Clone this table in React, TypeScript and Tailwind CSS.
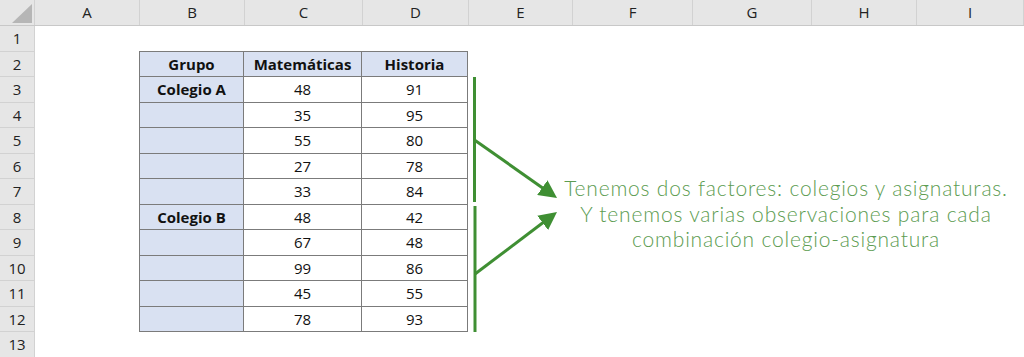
import React from "react";

// Anchos de columna (px) tomados de la captura
const cols = [
  { name: "A", w: "w-[105px]" },
  { name: "B", w: "w-[105px]" },
  { name: "C", w: "w-[118px]" },
  { name: "D", w: "w-[106px]" },
  { name: "E", w: "w-[104px]" },
  { name: "F", w: "w-[120px]" },
  { name: "G", w: "w-[119px]" },
  { name: "H", w: "w-[105px]" },
  { name: "I", w: "w-[107px]" },
];

const mates = [48, 35, 55, 27, 33, 48, 67, 99, 45, 78];
const historia = [91, 95, 80, 78, 84, 42, 48, 86, 55, 93];

function RowHeader({ n }: { n: number }) {
  return (
    <div className="w-[35px] shrink-0 h-full flex items-center justify-center bg-[#e6e6e6] border-r border-b border-[#d2d2d2] text-[15px] text-[#222]">
      {n}
    </div>
  );
}

function Row({ n }: { n: number }) {
  const tableRow = n >= 2 && n <= 12;
  const i = n - 3;
  const first = n === 2;
  const bold = n === 2 ? "font-bold" : "";
  return (
    <div className="flex h-[25.5px]">
      <RowHeader n={n} />
      <div className={`${cols[0].w} shrink-0`} />
      {tableRow ? (
        <>
          <div
            className={`${cols[1].w} shrink-0 flex items-center justify-center bg-[#d9e1f2] border-l border-r border-b border-[#7b7b7b] -ml-px ${first ? "border-t -mt-px" : ""} font-bold text-[15px] text-[#111]`}
          >
            {n === 2 ? "Grupo" : n === 3 ? "Colegio A" : n === 8 ? "Colegio B" : ""}
          </div>
          <div
            className={`${cols[2].w} shrink-0 flex items-center justify-center border-r border-b border-[#7b7b7b] ${first ? "bg-[#d9e1f2] border-t -mt-px" : "bg-white"} ${bold} text-[15px] text-[#111]`}
          >
            {n === 2 ? "Matemáticas" : mates[i]}
          </div>
          <div
            className={`${cols[3].w} shrink-0 flex items-center justify-center border-r border-b border-[#7b7b7b] -mr-px ${first ? "bg-[#d9e1f2] border-t -mt-px" : "bg-white"} ${bold} text-[15px] text-[#111]`}
          >
            {n === 2 ? "Historia" : historia[i]}
          </div>
        </>
      ) : (
        <>
          <div className={`${cols[1].w} shrink-0`} />
          <div className={`${cols[2].w} shrink-0`} />
          <div className={`${cols[3].w} shrink-0`} />
        </>
      )}
      <div className="flex-1" />
    </div>
  );
}

export default function App() {
  return (
    <div
      className="relative w-[1024px] h-[357px] overflow-hidden bg-white"
      style={{ fontFamily: "'Open Sans', 'Liberation Sans', sans-serif" }}
    >
      {/* Cabecera de columnas */}
      <div className="flex h-[26px] bg-[#e6e6e6] border-b border-[#c8c8c8]">
        <div className="w-[35px] shrink-0 relative border-r border-[#d2d2d2]">
          <svg className="absolute inset-0" width="35" height="26" viewBox="0 0 35 26">
            <polygon points="12,23 32,23 32,4" fill="#b6b6b6" />
          </svg>
        </div>
        {cols.map((c) => (
          <div
            key={c.name}
            className={`${c.w} shrink-0 flex items-center justify-center border-r border-[#d2d2d2] text-[15px] text-[#222]`}
          >
            {c.name}
          </div>
        ))}
      </div>

      {/* Filas */}
      <div className="flex flex-col">
        {Array.from({ length: 13 }, (_, k) => (
          <Row key={k + 1} n={k + 1} />
        ))}
      </div>

      {/* Llaves y flechas */}
      <svg className="absolute left-0 top-0 pointer-events-none" width="1024" height="357">
        <defs>
          <marker id="head" markerWidth="6" markerHeight="6" refX="4.2" refY="3" orient="auto" markerUnits="strokeWidth">
            <path d="M0,0 L6,3 L0,6 Z" fill="#3f8f33" />
          </marker>
        </defs>
        <line x1="474.5" y1="77" x2="474.5" y2="202" stroke="#3f8f33" strokeWidth="3" />
        <line x1="475" y1="206" x2="475" y2="332" stroke="#3f8f33" strokeWidth="3" />
        <line x1="474.5" y1="140" x2="552.6" y2="194.9" stroke="#3f8f33" strokeWidth="3" markerEnd="url(#head)" />
        <line x1="475" y1="274" x2="552.7" y2="215.3" stroke="#3f8f33" strokeWidth="3" markerEnd="url(#head)" />
      </svg>

      {/* Cuadro de texto */}
      <div
        className="absolute left-[536px] top-[175px] w-[500px] text-center text-[21px] leading-[25.5px] tracking-[0.8px] font-light text-[#5c9c51]"
        style={{ fontFamily: "Lato, 'Open Sans', sans-serif" }}
      >
        Tenemos dos factores: colegios y asignaturas.
        <br />
        Y tenemos varias observaciones para cada
        <br />
        combinación colegio-asignatura
      </div>
    </div>
  );
}
